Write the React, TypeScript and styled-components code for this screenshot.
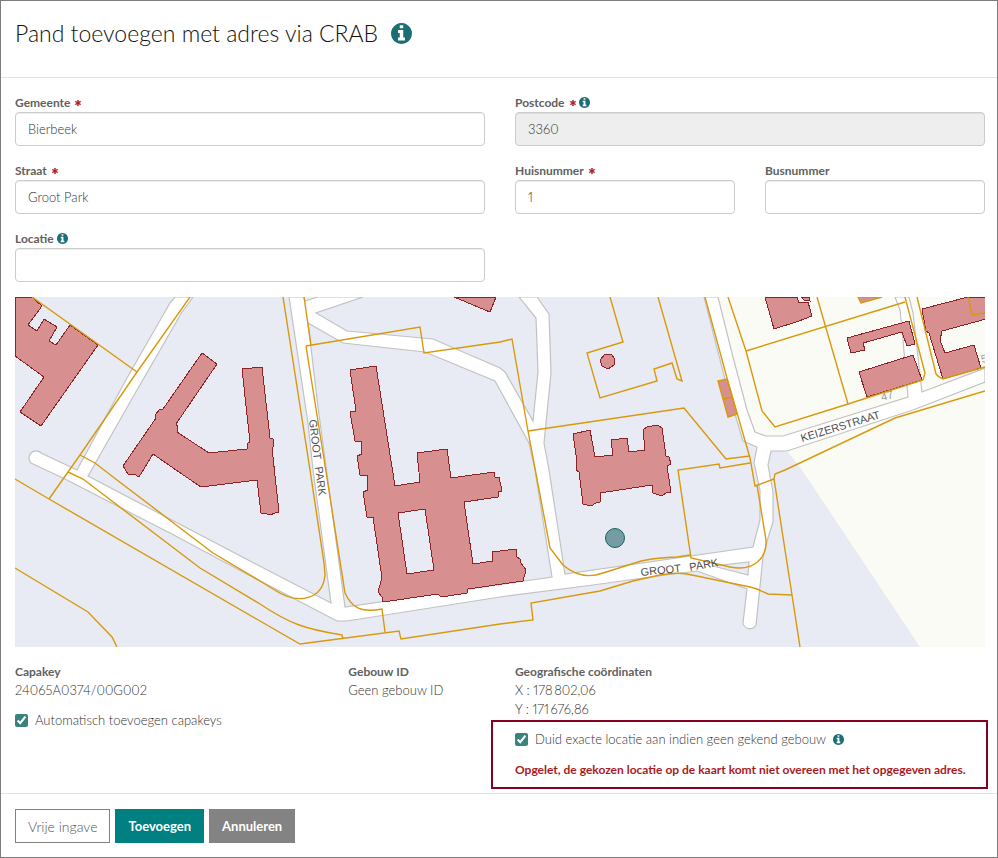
import React, { useState } from "react";
import styled, { createGlobalStyle, css } from "styled-components";
import { FaAsterisk } from "react-icons/fa";

const GlobalStyle = createGlobalStyle`
  * { box-sizing: border-box; }
  body {
    margin: 0;
    background: #fff;
    color: #333;
    font-family: Lato, "Noto Sans", sans-serif;
    font-size: 13px;
    font-weight: 300;
    font-variant-numeric: proportional-nums;
    line-height: 19px;
  }
`;

const Dialog = styled.main`
  border: 1px solid #7d7d7d;
  background: #fff;
`;

const Header = styled.header`
  display: flex;
  align-items: center;
  gap: 13px;
  padding: 13px 14px 25px;
  border-bottom: 1px solid #e3e3e3;
`;

const Title = styled.h1`
  margin: 0;
  color: #111;
  font-size: 23px;
  font-weight: 300;
  line-height: 38px;
`;

const InfoSvg = styled.svg<{ $large?: boolean }>`
  flex: none;
  width: ${(p) => (p.$large ? "21px" : "11px")};
  height: ${(p) => (p.$large ? "21px" : "11px")};
  fill: #1b6e75;
`;

function Info({ large }: { large?: boolean }) {
  return (
    <InfoSvg $large={large} viewBox="0 0 1536 1536" aria-hidden="true">
      <path d="M1024 1248v-160q0-14-9-23t-23-9h-96v-512q0-14-9-23t-23-9h-320q-14 0-23 9t-9 23v160q0 14 9 23t23 9h96v320h-96q-14 0-23 9t-9 23v160q0 14 9 23t23 9h448q14 0 23-9t9-23zM896 352v-160q0-14-9-23t-23-9h-192q-14 0-23 9t-9 23v160q0 14 9 23t23 9h192q14 0 23-9t9-23zM1536 768q0 209-103 385.5t-279.5 279.5-385.5 103-385.5-103-279.5-279.5-103-385.5 103-385.5 279.5-279.5 385.5-103 385.5 103 279.5 279.5 103 385.5z" />
    </InfoSvg>
  );
}

const Required = styled(FaAsterisk)`
  flex: none;
  margin-left: 2px;
  overflow: visible;
  color: #aa1a1e;
  font-size: 6px;
  stroke: currentColor;
  stroke-width: 40px;
`;

const Body = styled.div`
  display: flex;
  flex-direction: column;
  gap: 15px;
  padding: 15px 12px 4px 14px;
`;

const FieldGrid = styled.div`
  display: grid;
  grid-template-columns: repeat(4, 1fr);
  gap: 15px 30px;
`;

const FieldBox = styled.div<{ $span: number }>`
  grid-column: span ${(p) => p.$span};
`;

const LabelRow = styled.div`
  display: flex;
  align-items: center;
  height: 19px;
  gap: 3px;
`;

const Label = styled.label`
  color: #616161;
  font-size: 12px;
  font-weight: 700;
`;

const Input = styled.input`
  display: block;
  width: 100%;
  height: 34px;
  padding: 6px 12px;
  border: 1px solid #ccc;
  border-radius: 4px;
  background: #fff;
  box-shadow: inset 0 1px 1px rgba(0, 0, 0, 0.075);
  color: #333;
  font: inherit;

  &:disabled {
    background: #eee;
    opacity: 1;
  }
`;

const Map = styled.svg`
  display: block;
  width: 100%;
  background: #e8ebf3;
  font-family: "Liberation Sans", Arial, sans-serif;
  font-size: 11px;
  font-weight: 400;
`;

const InfoGrid = styled.div`
  display: grid;
  grid-template-columns: repeat(12, 1fr);
  column-gap: 30px;
`;

const InfoColumn = styled.section<{ $span: number }>`
  grid-column: span ${(p) => p.$span};
  white-space: nowrap;
`;

const Caption = styled.h2`
  margin: 0;
  color: #616161;
  font-size: 12px;
  font-weight: 700;
  line-height: 19px;
`;

const Value = styled.p`
  margin: 0;
`;

const CheckRow = styled.div<{ $spaced?: boolean }>`
  display: flex;
  align-items: center;
  gap: 7px;
  margin-top: ${(p) => (p.$spaced ? "11px" : "0")};
`;

const Checkbox = styled.input`
  width: 13px;
  height: 13px;
  margin: 0;
  accent-color: #39837d;
`;

const Highlight = styled.div`
  display: flex;
  flex-direction: column;
  gap: 11px;
  margin: 1px -3px 0 -24px;
  padding: 8px 0 8px 22px;
  border: 2px solid #86001f;
`;

const Warning = styled.p`
  margin: 0;
  color: #aa1a1e;
  font-size: 12px;
  font-weight: 700;
`;

const Footer = styled.footer`
  display: flex;
  gap: 5px;
  padding: 15px 14px 14px;
  border-top: 1px solid #e3e3e3;
`;

const tones = {
  outline: css`
    border-color: #828282;
    background: #fff;
    color: #555;
    font-size: 14px;
    font-weight: 300;
  `,
  primary: css`
    border-color: #008080;
    background: #008080;
    color: #fff;
    font-size: 13px;
    font-weight: 700;
  `,
  muted: css`
    border-color: #838383;
    background: #838383;
    color: #fff;
    font-size: 13px;
    font-weight: 700;
  `,
};

const Button = styled.button<{ $tone: keyof typeof tones }>`
  height: 34px;
  padding: 0 12px;
  border: 1px solid;
  font-family: inherit;
  cursor: pointer;
  ${(p) => tones[p.$tone]}
`;

type FieldProps = {
  id: string;
  label: string;
  value?: string;
  span: number;
  required?: boolean;
  info?: boolean;
  disabled?: boolean;
};

function Field({ id, label, value = "", span, required, info, disabled }: FieldProps) {
  const [text, setText] = useState(value);
  return (
    <FieldBox $span={span}>
      <LabelRow>
        <Label htmlFor={id}>{label}</Label>
        {required && <Required />}
        {info && <Info />}
      </LabelRow>
      <Input id={id} value={text} disabled={disabled} onChange={(e) => setText(e.target.value)} />
    </FieldBox>
  );
}

const roads =
  "M175 297 170 303 127 378 77 470 41 453A7 7 0 0 0 31 463L65 479 127 511 170 533 243 572 337 621H347L500 597 593 585 643 578 697 571 747 589 743 623A7 7 0 0 0 756 625L763 557 768 538 773 522V492L768 465 771 451H787L913 410 985 382V368L922 392 913 313 909 297H895L900 310 903 340 908 397 783 436H766L755 432 747 410 733 357 718 297H704L727 387 743 441 757 447 754 463 760 490V520L753 547 565 574 549 470 544 443 551 373 549 314 537 297H519L536 318 538 372 533 421 505 372 500 368 433 339 347 331 316 313 363 297H318L305 301 304 297H289L308 423 313 470 331 603 250 561 88 476 137 390 182 312 193 297Z" +
  "M308 323 343 343 425 352 495 381 529 443 535 470 552 577 525 581 345 607 318 407Z" +
  "M713 566 749 562 748 575Z";

const buildings = [
  "M15 297H32L42 306 28 325 37 331 44 319 57 327 49 341 56 345 70 325 98 345 41 426 20 412 44 377 15 356Z",
  "M202 353 217 364 176 424 178 427 177 432 209 453 247 449 248 443 250 442 242 369 262 367 270 438 273 439 274 446 272 448 279 512 275 513 270 515 267 514 261 513 257 480 201 487 176 470 153 454 139 477 134 474H128L123 466 156 418 155 415 160 409H163Z",
  "M454 297 490 312 496 297Z",
  "M350 370 376 366 395 486 420 482 417 453 447 449 451 478 494 472 495 477H499L502 491 498 492V497L464 502 473 564 493 561 492 552 516 549 517 557 520 559 521 563 526 570 523 581 468 589 467 593 448 596H440L438 594 383 602 382 597 378 592 379 588 382 578 373 517H367L363 492 368 490 367 475H360L357 456 362 454 361 441H355L350 412 356 411ZM398 513 407 574 434 570 425 509Z",
  "M573 434 590 430 595 457 613 455 611 440 627 438 629 452 645 450 643 430 647 427 658 425 662 428 666 456 669 457 671 464 667 466 671 492 666 493 662 496 653 493 652 485 600 493V502L596 503 591 506 583 504 579 472 576 470 577 462Z",
  "M605 354 611 354 615 359 614 365 608 369 602 366 600 360Z",
  "M765 297 774 329 799 321 812 316 808 302 799 303 797 297Z",
  "M801 297 804 300 810 301 809 297Z",
  "M847 338 909 321 915 344 907 346 902 332 863 343 865 350 851 353Z",
  "M859 372 913 355 922 380 867 397Z",
  "M922 309 968 297H986V319L942 331 940 340 945 353 974 345 981 368 943 379 929 333 926 331Z",
];

const edgedBuildings = ["M858 297 861 303 882 297Z", "M718 381 727 379 737 414 728 417ZM724 399 732 397"];

const parcels = [
  "M32 297 137 372",
  "M190 297 137 372 80 455 49 499",
  "M15 479 49 499 260 621 300 644 399 631 401 639 500 624 533 620 531 603 600 591 633 581 660 575 Q675 572 687 574L750 587 757 589 768 594 792 595",
  "M80 455 95 463 117 480 213 553 260 581 273 589C300 607 323 598 325 575L324 563 310 470 283 297",
  "M68 472 83 479 200 568 260 604C290 624 305 629 342 635L343 639",
  "M304 297 311 345",
  "M306 346 420 327 424 353 500 342 512 339 528 431 550 548 563 565C578 578 592 577 603 573L638 562 Q650 558 677 557L690 555",
  "M306 346 327 478 345 593C352 608 361 613 382 609L385 632",
  "M528 431 684 408 726 459 750 456",
  "M750 463 720 468 719 464 678 470 691 558 730 567C755 572 767 557 766 540L757 485",
  "M705 297 727 378 750 458 755 486 774 479 775 474 785 470 895 418 985 391",
  "M774 479 792 595 800 647",
  "M610 297 623 342 587 353 600 398 657 381 654 369 672 363 677 379 682 381 658 297",
  "M728 297 746 351 762 411 775 427 848 404 923 380 925 373 905 297",
  "M746 351 905 302",
  "M817 297 848 404",
  "M917 297 936 374 Q938 377 943 379L985 367",
  "M968 297 972 315 985 313",
  "M15 568 88 612 112 637 117 647",
];

function ParcelMap() {
  return (
    <Map viewBox="15 297 970 350" role="img" aria-label="Kaart">
      <path d="M716 297H985V647H920L802 470 788 452 755 440Z" fill="#fbfbf6" />
      <path d={roads} fill="#fff" fillRule="evenodd" stroke="#c2c2c2" strokeWidth="1.2" />
      <g fill="#d78f8f" fillRule="evenodd" stroke="#8c2226" shapeRendering="crispEdges">
        {buildings.map((d) => (
          <path key={d} d={d} />
        ))}
      </g>
      <g fill="#d78f8f" stroke="#d8990c" strokeWidth="1.4">
        {edgedBuildings.map((d) => (
          <path key={d} d={d} />
        ))}
      </g>
      <g fill="none" stroke="#d8990c" strokeWidth="1.4">
        {parcels.map((d) => (
          <path key={d} d={d} />
        ))}
      </g>
      <g fill="#4d4d4d">
        <text transform="translate(309 420) rotate(83)">GROOT</text>
        <text transform="translate(315 467) rotate(83)">PARK</text>
        <text transform="translate(641 576) rotate(-6)">GROOT</text>
        <text transform="translate(690 571) rotate(-10)">PARK</text>
        <text transform="translate(802 442) rotate(-17)">KEIZERSTRAAT</text>
      </g>
      <g fill="#999">
        <text transform="translate(882 401) rotate(-14)">47</text>
        <text transform="translate(982 363) rotate(-14)">5</text>
      </g>
      <circle cx="615" cy="538" r="9.5" fill="#739da2" stroke="#17625f" />
    </Map>
  );
}

export default function App() {
  return (
    <>
      <GlobalStyle />
      <Dialog>
        <Header>
          <Title>Pand toevoegen met adres via CRAB</Title>
          <Info large />
        </Header>
        <Body>
          <FieldGrid>
            <Field id="gemeente" label="Gemeente" value="Bierbeek" span={2} required />
            <Field id="postcode" label="Postcode" value="3360" span={2} required info disabled />
            <Field id="straat" label="Straat" value="Groot Park" span={2} required />
            <Field id="huisnummer" label="Huisnummer" value="1" span={1} required />
            <Field id="busnummer" label="Busnummer" span={1} />
            <Field id="locatie" label="Locatie" span={2} info />
          </FieldGrid>
          <ParcelMap />
          <InfoGrid>
            <InfoColumn $span={4}>
              <Caption>Capakey</Caption>
              <Value>24065A0374/00G002</Value>
              <CheckRow $spaced>
                <Checkbox type="checkbox" id="auto-capakeys" defaultChecked />
                <label htmlFor="auto-capakeys">Automatisch toevoegen capakeys</label>
              </CheckRow>
            </InfoColumn>
            <InfoColumn $span={2}>
              <Caption>Gebouw ID</Caption>
              <Value>Geen gebouw ID</Value>
            </InfoColumn>
            <InfoColumn $span={6}>
              <Caption>Geografische coördinaten</Caption>
              <Value>X : 178&thinsp;802,06</Value>
              <Value>Y : 171&thinsp;676,86</Value>
              <Highlight>
                <CheckRow>
                  <Checkbox type="checkbox" id="exacte-locatie" defaultChecked />
                  <label htmlFor="exacte-locatie">Duid exacte locatie aan indien geen gekend gebouw</label>
                  <Info />
                </CheckRow>
                <Warning>Opgelet, de gekozen locatie op de kaart komt niet overeen met het opgegeven adres.</Warning>
              </Highlight>
            </InfoColumn>
          </InfoGrid>
        </Body>
        <Footer>
          <Button type="button" $tone="outline">Vrije ingave</Button>
          <Button type="button" $tone="primary">Toevoegen</Button>
          <Button type="button" $tone="muted">Annuleren</Button>
        </Footer>
      </Dialog>
    </>
  );
}
